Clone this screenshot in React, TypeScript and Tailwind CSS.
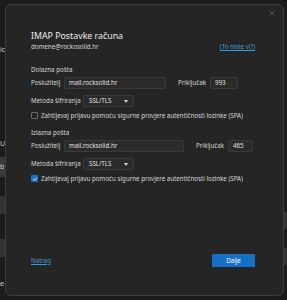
import { X } from "lucide-react";

function Field({ value, width }: { value: string; width: string }) {
  return (
    <div
      className={`flex h-[12px] items-center rounded-[1px] border border-[#3a3a3a] bg-[#2b2b2b] pl-[4px] text-[6.2px] text-[#e0e0e0] ${width}`}
    >
      {value}
    </div>
  );
}

function Select() {
  return (
    <div className="flex h-[12px] w-[51px] items-center justify-between rounded-[1px] border border-[#3a3a3a] bg-[#2b2b2b] pl-[5px] pr-[5px] text-[6.2px] text-[#e0e0e0]">
      <span>SSL/TLS</span>
      <span className="h-0 w-0 border-x-[2.5px] border-t-[3px] border-x-transparent border-t-[#d8d8d8]" />
    </div>
  );
}

function Checkbox({ checked }: { checked?: boolean }) {
  if (checked) {
    return (
      <div className="flex h-[7px] w-[7px] items-center justify-center rounded-[1px] bg-[#1a73c8]">
        <svg viewBox="0 0 8 8" className="h-[6px] w-[6px]">
          <path d="M1.5 4.2 L3.2 5.8 L6.5 2.2" fill="none" stroke="#fff" strokeWidth="1.2" />
        </svg>
      </div>
    );
  }
  return <div className="h-[7px] w-[7px] rounded-[1px] border border-[#6a6a6a]" />;
}

function ServerSection({
  title,
  inputWidth,
  portWidth,
  port,
  checked,
}: {
  title: string;
  inputWidth: string;
  portWidth: string;
  port: string;
  checked?: boolean;
}) {
  return (
    <div className="flex flex-col whitespace-nowrap text-[6.2px] text-[#d6d6d6]">
      <div className="h-[10px] leading-[10px]">{title}</div>
      <div className="mt-[2px] flex items-center">
        <span className="w-[33px]">Poslužitelj</span>
        <Field value="mail.rocksolid.hr" width={inputWidth} />
        <span className="ml-[12px] w-[32px]">Priključak</span>
        <Field value={port} width={portWidth} />
      </div>
      <div className="mt-[6px] flex items-center">
        <span className="w-[52px]">Metoda šifriranja</span>
        <Select />
      </div>
      <div className="mt-[4px] flex h-[9px] items-center gap-[3px]">
        <Checkbox checked={checked} />
        <span>Zahtijevaj prijavu pomoću sigurne provjere autentičnosti lozinke (SPA)</span>
      </div>
    </div>
  );
}

export default function App() {
  return (
    <div
      className="relative h-[300px] w-[287px] overflow-hidden bg-[#1c1c1c]"
      style={{ fontFamily: '"Noto Sans", "Open Sans", sans-serif' }}
    >
      {/* page behind the dialog */}
      <div className="flex h-full justify-between">
        <div className="flex w-[5px] flex-col text-[7px] text-[#cfcfcf]">
          <span className="mt-[45px]">ic</span>
          <span className="mt-[83px]">U</span>
          <div className="mt-[8px] h-[20px] bg-[#3a3a3a] pt-[5px]">b</div>
          <div className="mt-[19px] h-[18px] bg-[#333]" />
          <div className="mt-[25px] h-[18px] bg-[#333]" />
          <span className="mt-[22px]">e</span>
        </div>
        <div className="flex w-[4px] flex-col">
          <div className="mt-[212px] h-[17px] bg-[#333]" />
          <div className="mt-[19px] h-[17px] bg-[#333]" />
        </div>
      </div>

      {/* dialog */}
      <div className="absolute left-[5px] top-[4px] flex h-[292px] w-[279px] flex-col rounded-[6px] border border-[#3d3d3d] bg-[#252525] pl-[25px] pr-[28px] pt-[25px]">
        <X className="absolute right-[7px] top-[4px] h-[8px] w-[8px] text-[#8a8a8a]" strokeWidth={1.5} />
        <div className="text-[8.8px] leading-[12px] text-[#ececec]">IMAP Postavke računa</div>
        <div className="flex items-center justify-between text-[6.2px] leading-[10px]">
          <span className="text-[#d6d6d6]">domene@rockosolid.hr</span>
          <span className="text-[#3b9ddb] underline">(To niste vi?)</span>
        </div>
        <div className="mt-[13px]">
          <ServerSection title="Dolazna pošta" inputWidth="w-[102px]" portWidth="w-[28px]" port="993" />
        </div>
        <div className="mt-[8px]">
          <ServerSection title="Izlazna pošta" inputWidth="w-[120px]" portWidth="w-[25px]" port="465" checked />
        </div>
        <div className="mt-auto mb-[28px] flex items-center justify-between">
          <span className="text-[6.2px] text-[#3b9ddb] underline">Natrag</span>
          <button className="h-[13px] w-[43px] rounded-[1px] bg-[#1570c6] text-[6.2px] text-white">Dalje</button>
        </div>
      </div>
    </div>
  );
}
